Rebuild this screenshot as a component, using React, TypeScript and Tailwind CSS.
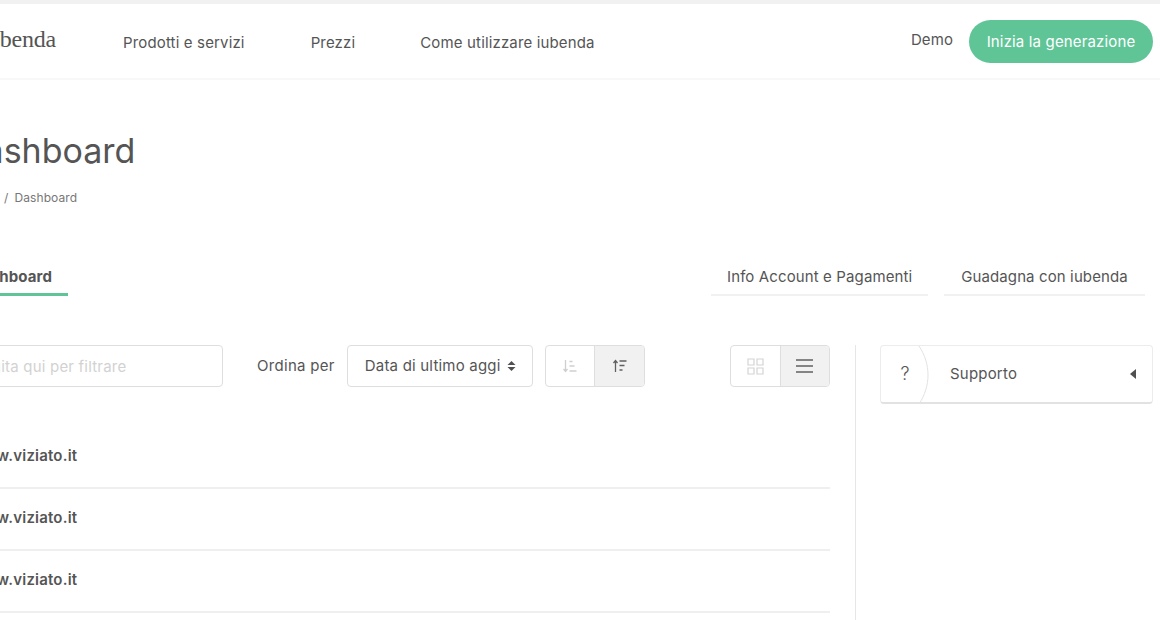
const sites = ["www.viziato.it", "www.viziato.it", "www.viziato.it"];

const SortAscIcon = ({ color }: { color: string }) => (
  <svg width="16" height="14" viewBox="0 0 16 14" fill="none" stroke={color} strokeWidth="1.3">
    <path d="M3.5 1v11M1.5 10l2 2.5 2-2.5" />
    <path d="M7.5 2.5h3M7.5 7h5M7.5 12h7" />
  </svg>
);

const SortDescIcon = ({ color }: { color: string }) => (
  <svg width="16" height="14" viewBox="0 0 16 14" fill="none" stroke={color} strokeWidth="1.3">
    <path d="M3.5 13V2M1.5 4l2-2.5 2 2.5" />
    <path d="M7.5 2h7M7.5 6.5h5M7.5 11h3" />
  </svg>
);

const App = () => {
  return (
    <div className="w-[1160px] h-[620px] overflow-hidden bg-white font-['Inter',sans-serif] text-[#555]">
      <div className="h-1 bg-[#f1f1f1]" />
      {/* Header */}
      <header className="h-[76px] flex items-center border-b-2 border-[#f8f8f8] pr-[7px]">
        <div className="w-[123px] shrink-0 flex justify-end pr-[67px]">
          <span className="font-['Liberation_Serif',serif] text-[24px] tracking-[-0.2px] whitespace-nowrap -mt-1">iubenda</span>
        </div>
        <nav className="flex gap-[66px] text-[15px] tracking-[0.15px] mt-1">
          <span>Prodotti e servizi</span>
          <span>Prezzi</span>
          <span className="-ml-px">Come utilizzare iubenda</span>
        </nav>
        <span className="ml-auto text-[15px] mr-4 -mt-0.5 tracking-[0.1px]">Demo</span>
        <button className="h-[43px] w-[184px] rounded-full bg-[#5fc597] text-white text-[15px] tracking-[0.15px] pt-0.5">
          Inizia la generazione
        </button>
      </header>

      <div className="-ml-[60px] pr-[7px]">
        <h1 className="pl-5 mt-[49px] text-[34px] leading-[44px] font-normal whitespace-nowrap">Dashboard</h1>
        <div className="pl-5 mt-[17px] text-xs leading-4 text-[#777] tracking-[0.1px] whitespace-nowrap">
          <span className="inline-block w-[41px]">Home</span>
          <span className="mr-[6px] ml-[3px]">/</span>Dashboard
        </div>

        {/* Tabs */}
        <div className="mt-[51px] flex justify-between text-[15px] tracking-[0.12px]">
          <div className="pl-5 pr-4 pt-2 w-[128px] h-[39px] border-b-[3px] border-[#5fc597] font-bold leading-6 whitespace-nowrap flex justify-end">
            Dashboard
          </div>
          <div className="flex gap-4 pr-2">
            <div className="w-[217px] h-[39px] pt-2 border-b-2 border-[#f1f1f1] px-4 leading-6 text-center whitespace-nowrap">
              Info Account e Pagamenti
            </div>
            <div className="w-[201px] h-[39px] pt-2 border-b-2 border-[#f1f1f1] px-4 leading-6 text-center whitespace-nowrap">
              Guadagna con iubenda
            </div>
          </div>
        </div>

        {/* Body */}
        <div className="mt-[49px] flex">
          <div className="w-[890px] shrink-0">
            <div className="flex items-center h-[42px] tracking-[0.2px]">
              <input
                readOnly
                placeholder="Digita qui per filtrare"
                className="w-[283px] h-[42px] pl-[36px] border border-[#dedede] rounded text-[15px] tracking-[0.2px] placeholder:text-[#d2d2d2] outline-none"
              />
              <span className="ml-[34px] text-[15px] tracking-[0.3px]">Ordina per</span>
              <div className="ml-3 w-[186px] h-[42px] border border-[#dedede] rounded flex items-center pl-[17px] text-[15px] whitespace-nowrap">
                Data di ultimo aggi
                <svg className="ml-1.5" width="9" height="12" viewBox="0 0 9 12" fill="#505050">
                  <path d="M4.5 1 8.5 5H.5zM4.5 11 .5 7h8z" />
                </svg>
              </div>
              <div className="ml-3 w-[100px] h-[42px] border border-[#dedede] rounded flex overflow-hidden">
                <div className="flex-1 flex items-center justify-center border-r border-[#dedede]">
                  <SortAscIcon color="#cfcfcf" />
                </div>
                <div className="flex-1 flex items-center justify-center bg-[#f1f1f1]">
                  <SortDescIcon color="#606060" />
                </div>
              </div>
              <div className="ml-auto w-[100px] h-[42px] border border-[#dedede] rounded flex overflow-hidden">
                <div className="flex-1 flex items-center justify-center border-r border-[#dedede]">
                  <svg width="17" height="17" viewBox="0 0 17 17" fill="none" stroke="#d4d4d4" strokeWidth="1.2">
                    <path d="M1 1h6v6H1zM10 1h6v6h-6zM1 10h6v6H1zM10 10h6v6h-6z" />
                  </svg>
                </div>
                <div className="flex-1 flex items-center justify-center bg-[#f1f1f1]">
                  <svg width="17" height="14" viewBox="0 0 17 14" fill="none" stroke="#606060" strokeWidth="1.3">
                    <path d="M0 1h17M0 7h17M0 13h17" />
                  </svg>
                </div>
              </div>
            </div>

            <div className="mt-10">
              {sites.map((site, i) => (
                <div key={i} className="h-[62px] pl-[31px] pb-0.5 border-b-2 border-[#efefef] flex items-center text-[15px] tracking-[0.2px] font-semibold">
                  {site}
                </div>
              ))}
            </div>
          </div>

          <div className="ml-[25px] pl-[24px] border-l border-[#e6e6e6] flex-1 h-[300px]">
            {/* Support card */}
            <div className="relative h-[59px] border border-[#ececec] border-b-2 border-b-[#e2e2e2] rounded flex items-center overflow-hidden">
              <span className="w-[48px] text-center text-lg font-light">?</span>
              <span className="ml-[21px] text-[15px] tracking-[0.2px]">Supporto</span>
              <svg className="ml-auto mr-4" width="6" height="10" viewBox="0 0 6 10" fill="#505050">
                <path d="M6 0v10L0 5z" />
              </svg>
              <svg className="absolute left-[36px] top-0" width="14" height="58" viewBox="0 0 14 58" fill="none" stroke="#e2e2e2">
                <path d="M2 0C14 18 14 40 2 58" />
              </svg>
            </div>
          </div>
        </div>
      </div>
    </div>
  );
};

export default App;
